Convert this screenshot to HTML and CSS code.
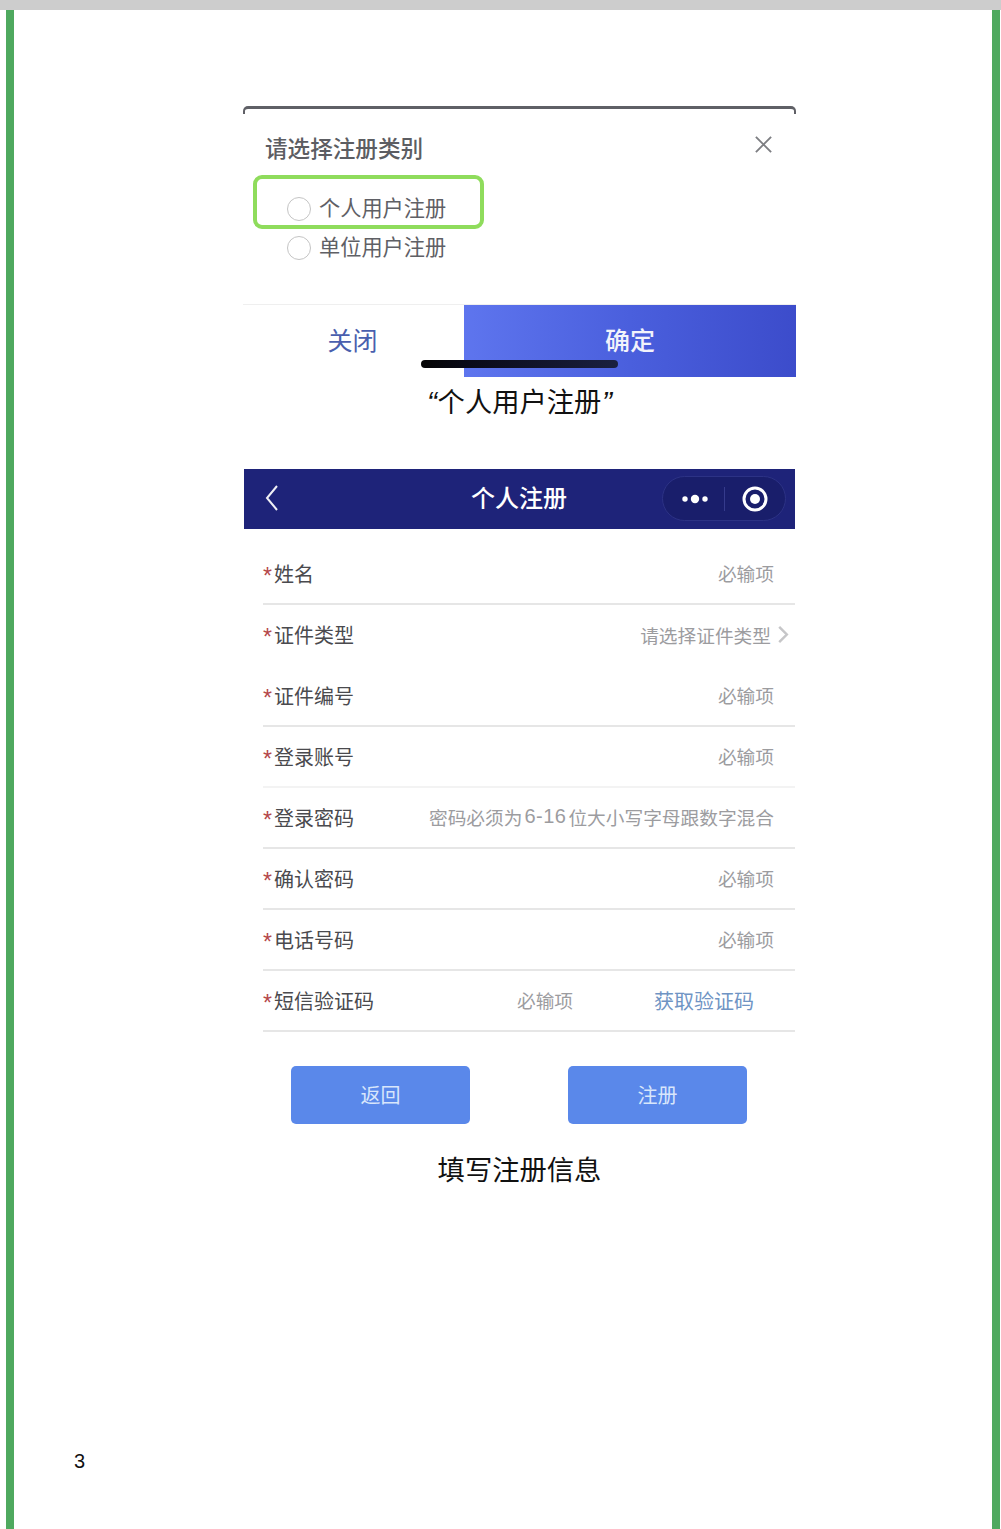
FILE: index.html
```html
<!DOCTYPE html>
<html lang="zh-CN">
<head>
<meta charset="utf-8">
<title>注册</title>
<link rel="stylesheet" href="styles.css">
</head>
<body>
<div class="topbar"></div>
<div class="frame">
  <main class="sheet">
    <section class="modal">
      <div class="modal-top"></div>
      <div class="modal-body">
        <div class="modal-head">
          <h2 class="modal-title">请选择注册类别</h2>
          <svg class="close" viewBox="0 0 20 20"><path d="M2 2L18 18M18 2L2 18"/></svg>
        </div>
        <div class="radios">
          <div class="highlight"></div>
          <label class="radio"><span class="dot"></span>个人用户注册</label>
          <label class="radio"><span class="dot"></span>单位用户注册</label>
        </div>
      </div>
      <div class="modal-foot">
        <div class="btn-close">关闭</div>
        <div class="btn-ok">确定</div>
        <div class="home"></div>
      </div>
    </section>
    <p class="caption cap-one"><span class="q">“</span>个人用户注册<span class="q">”</span></p>

    <section class="phone">
      <header class="nav">
        <svg class="back" viewBox="0 0 14 28"><path d="M12 2L2 14L12 26"/></svg>
        <span class="nav-title">个人注册</span>
        <div class="capsule">
          <svg class="more" viewBox="0 0 28 10"><circle cx="4" cy="5" r="2.7"/><circle cx="14" cy="5" r="4.2"/><circle cx="24" cy="5" r="2.7"/></svg>
          <span class="sep"></span>
          <svg class="target" viewBox="0 0 26 26"><circle class="ring" cx="13" cy="13" r="11"/><circle cx="13" cy="13" r="5"/></svg>
        </div>
      </header>
      <div class="form">
        <div class="row"><span class="label"><i>*</i>姓名</span><span class="hint">必输项</span></div>
        <div class="row no-line"><span class="label"><i>*</i>证件类型</span><span class="hint hint-sel">请选择证件类型<svg class="chev" viewBox="0 0 12 20"><path d="M2 2L10 10L2 18"/></svg></span></div>
        <div class="row"><span class="label"><i>*</i>证件编号</span><span class="hint">必输项</span></div>
        <div class="row faint"><span class="label"><i>*</i>登录账号</span><span class="hint">必输项</span></div>
        <div class="row"><span class="label"><i>*</i>登录密码</span><span class="hint">密码必须为<span class="digits">6-16</span>位大小写字母跟数字混合</span></div>
        <div class="row"><span class="label"><i>*</i>确认密码</span><span class="hint">必输项</span></div>
        <div class="row"><span class="label"><i>*</i>电话号码</span><span class="hint">必输项</span></div>
        <div class="row sms"><span class="label"><i>*</i>短信验证码</span><span class="hint">必输项</span><span class="getcode">获取验证码</span></div>
      </div>
      <div class="actions">
        <button class="act">返回</button>
        <button class="act">注册</button>
      </div>
    </section>
    <p class="caption cap-two">填写注册信息</p>
  </main>
  <div class="pageno">3</div>
</div>
</body>
</html>
```
FILE: styles.css
```css
* { box-sizing: border-box; }
html, body { margin: 0; padding: 0; background: #fff; }
body {
  width: 1001px;
  height: 1529px;
  overflow: hidden;
  font-family: "Noto Sans CJK SC", "Liberation Sans", sans-serif;
}
.topbar { height: 10px; background: #cdcdcd; }
.frame {
  position: relative;
  height: 1519px;
  margin: 0 1px 0 6px;
  border-left: 8px solid #4fa95f;
  border-right: 8px solid #4fa95f;
  padding: 96px 0 0 229px;
}
.sheet { width: 553px; }

.modal { width: 553px; height: 271px; display: flex; flex-direction: column; }
.modal-top {
  height: 12px;
  margin-bottom: -9px;
  border-top: 3px solid #5f6066;
  border-left: 2px solid #5f6066;
  border-right: 2px solid #5f6066;
  border-radius: 5px 5px 0 0;
  border-bottom: 0;
  clip-path: inset(0 0 4px 0);
}
.modal-body { flex: 1; padding: 0 22px; position: relative; }
.modal-head { display: flex; justify-content: space-between; align-items: flex-start; }
.modal-title {
  margin: 23px 0 0;
  font-size: 22.6px;
  line-height: 32px;
  font-weight: 500;
  color: #5c5d62;
}
.close { width: 19px; height: 19px; margin: 26px 1px 0 0; fill: none; stroke: #7d7e82; stroke-width: 2; }
.radios { position: relative; margin: 24px 0 0 22px; }
.highlight {
  position: absolute;
  left: -34px;
  top: -13px;
  width: 231px;
  height: 54px;
  border: 4.5px solid #8fdc5c;
  border-radius: 9px;
}
.radio {
  display: flex;
  align-items: center;
  gap: 8px;
  height: 39px;
  padding-bottom: 2px;
  font-size: 21.2px;
  color: #5f6065;
}
.dot {
  width: 24px;
  height: 24px;
  border: 1.5px solid #c4c4c4;
  border-radius: 50%;
  background: #fff;
  position: relative;
  top: 2px;
}

.modal-foot {
  position: relative;
  height: 73px;
  display: flex;
  border-top: 1px solid #efefef;
}
.btn-close {
  width: 221px;
  padding-right: 2px;
  text-align: center;
  font-size: 25px;
  line-height: 68px;
  color: #4a5fae;
}
.btn-ok {
  flex: 1;
  text-align: center;
  font-size: 25px;
  line-height: 68px;
  font-weight: 500;
  color: #f2f3fb;
  background: linear-gradient(90deg, #5e75ee 0%, #4a5fdd 50%, #3c4ccb 100%);
}
.home {
  position: absolute;
  left: 178px;
  top: 55px;
  width: 197px;
  height: 8px;
  border-radius: 4px;
  background: linear-gradient(90deg, #050505 0%, #0a0a18 25%, #1a2040 100%);
}

.caption {
  margin: 0;
  text-align: center;
  font-size: 27.3px;
  color: #111;
  width: 553px;
}
.q { font-family: "Liberation Sans", sans-serif; font-style: italic; font-size: 30px; line-height: 0; margin: 0 0.5px; }
.cap-one { height: 92px; padding-top: 3px; line-height: 40px; }
.cap-two { margin-top: 24px; line-height: 40px; }

.phone { width: 553px; padding-left: 1px; }
.nav {
  position: relative;
  width: 551px;
  height: 60px;
  background: #1e2379;
  display: flex;
  align-items: center;
  justify-content: center;
}
.back { position: absolute; left: 21px; top: 15px; width: 14px; height: 28px; fill: none; stroke: #f0f0f5; stroke-width: 2; }
.nav-title { font-size: 24px; font-weight: 500; color: #fff; margin-left: -1px; position: relative; top: -3px; }
.capsule {
  position: absolute;
  left: 418px;
  top: 7px;
  width: 124px;
  height: 45px;
  display: flex;
  align-items: center;
  border-radius: 23px;
  background: #191e6b;
  border: 1px solid #2c3285;
}
.more { width: 28px; height: 10px; margin-left: 18px; fill: #fff; }
.sep { width: 1px; height: 24px; background: #353b8c; margin-left: 15px; }
.target { width: 26px; height: 26px; margin-left: 17px; fill: #fff; }
.target .ring { fill: none; stroke: #fff; stroke-width: 3; }

.form { padding-top: 15px; }
.row {
  height: 61px;
  margin-left: 19px;
  width: 532px;
  display: flex;
  align-items: center;
  justify-content: space-between;
  border-bottom: 2px solid #e6e6e6;
  padding-right: 21px;
  padding-bottom: 1px;
}
.row.no-line { border-bottom-color: transparent; }
.row.faint { border-bottom-color: #f3f3f3; }
.label { font-size: 20px; color: #4a4a4e; }
.label i {
  display: inline-block;
  width: 11px;
  line-height: 1;
  vertical-align: -2px;
  font-style: normal;
  color: #b5474a;
  font-size: 23px;
  font-family: "Liberation Sans", sans-serif;
}
.hint { font-size: 18.7px; color: #9c9c9f; white-space: nowrap; display: flex; align-items: center; position: relative; top: -1px; }
.digits {
  font: 20px "Liberation Sans", sans-serif;
  letter-spacing: 0.5px;
  margin: 0 2px;
}
.hint-sel { left: 15px; top: 0; gap: 6px; }
.chev { width: 12px; height: 19px; fill: none; stroke: #c6c6c8; stroke-width: 2.6; }
.sms { justify-content: flex-start; }
.sms .label { width: 254px; }
.getcode { margin-left: 81px; font-size: 20px; color: #6f94c4; }

.actions { display: flex; gap: 98px; padding: 34px 0 0 47px; }
.act {
  width: 179px;
  height: 58px;
  border: 0;
  border-radius: 5px;
  padding-bottom: 3px;
  background: #5a88ea;
  color: #d8e6fb;
  font: 400 20px "Noto Sans CJK SC", sans-serif;
}

.pageno {
  position: absolute;
  left: 60px;
  top: 1439px;
  font: 20px/24px "Liberation Sans", sans-serif;
  color: #111;
}
```
